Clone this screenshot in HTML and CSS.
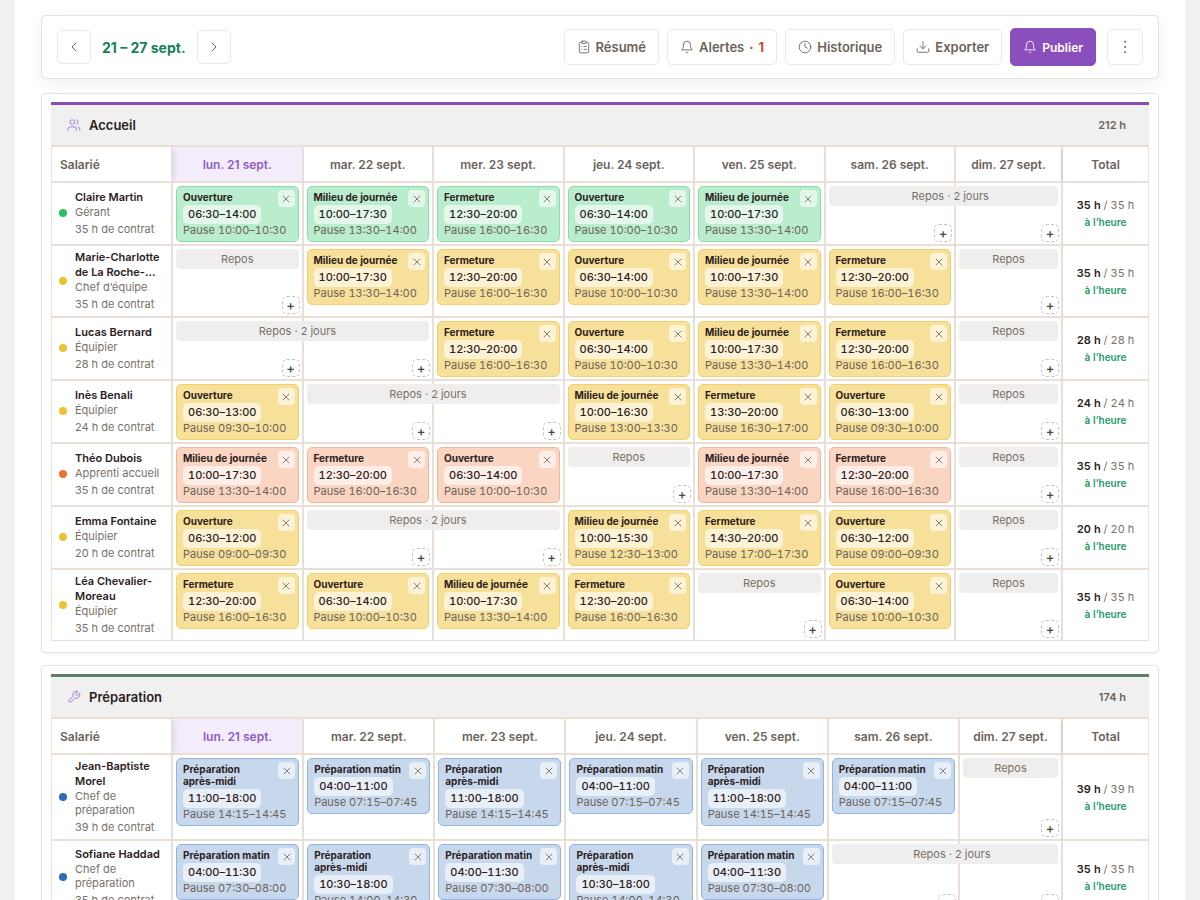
FILE: index.html
```html
<!DOCTYPE html>
<html lang="fr">
<head>
  <meta charset="UTF-8">
  <meta name="viewport" content="width=device-width, initial-scale=1">
  <title>Planning 21 – 27 sept.</title>
  <link rel="stylesheet" href="styles.css">
</head>
<body>
  <main class="page">
    <header class="toolbar">
      <div class="week">
        <button class="btn square" aria-label="Semaine précédente"><svg class="icon" viewBox="0 0 24 24"><path d="m15 18-6-6 6-6"/></svg></button>
        <strong class="week-label">21 – 27 sept.</strong>
        <button class="btn square" aria-label="Semaine suivante"><svg class="icon" viewBox="0 0 24 24"><path d="m9 18 6-6-6-6"/></svg></button>
      </div>
      <div class="actions">
        <button class="btn"><svg class="icon" viewBox="0 0 24 24"><rect x="8" y="2" width="8" height="4" rx="1"/><path d="M16 4h2a2 2 0 0 1 2 2v14a2 2 0 0 1-2 2H6a2 2 0 0 1-2-2V6a2 2 0 0 1 2-2h2M12 11h4M12 16h4M8 11h.01M8 16h.01"/></svg>Résumé</button>
        <button class="btn"><svg class="icon" viewBox="0 0 24 24"><path d="M10.3 21a2 2 0 0 0 3.4 0M6 8a6 6 0 0 1 12 0c0 7 3 9 3 9H3s3-2 3-9"/></svg>Alertes <span class="alert-count"><span>·</span><span>1</span></span></button>
        <button class="btn"><svg class="icon" viewBox="0 0 24 24"><circle cx="12" cy="12" r="10"/><path d="M12 6v6l4 2"/></svg>Historique</button>
        <button class="btn"><svg class="icon" viewBox="0 0 24 24"><path d="M22 15v4a2 2 0 0 1-2 2H4a2 2 0 0 1-2-2v-4M7 10l5 5 5-5M12 15V3"/></svg>Exporter</button>
        <button class="btn primary"><svg class="icon" viewBox="0 0 24 24"><path d="M10.3 21a2 2 0 0 0 3.4 0M6 8a6 6 0 0 1 12 0c0 7 3 9 3 9H3s3-2 3-9"/></svg>Publier</button>
        <button class="btn more" aria-label="Plus d’actions"><svg class="icon dots" viewBox="0 0 24 24"><circle cx="12" cy="3" r="1"/><circle cx="12" cy="12" r="1"/><circle cx="12" cy="21" r="1"/></svg></button>
      </div>
    </header>

    <section class="card accueil">
      <div class="card-head">
        <svg class="icon" viewBox="0 0 24 24"><path d="M16 21v-2a4 4 0 0 0-4-4H6a4 4 0 0 0-4 4v2M22 21v-2a4 4 0 0 0-3-3.870M16 3.130a4 4 0 0 1 0 7.750"/><circle cx="9" cy="7" r="4"/></svg>
        <h2>Accueil</h2>
        <span class="hours">212 h</span>
      </div>
      <table id="accueil"></table>
    </section>

    <section class="card preparation">
      <div class="card-head">
        <svg class="icon" viewBox="0 0 24 24"><path d="M14.700 6.300a1 1 0 0 0 0 1.400l1.600 1.600a1 1 0 0 0 1.400 0l3.770-3.770a6 6 0 0 1-7.940 7.940l-6.910 6.910a2.120 2.120 0 0 1-3-3l6.910-6.910a6 6 0 0 1 7.940-7.940z"/></svg>
        <h2>Préparation</h2>
        <span class="hours">174 h</span>
      </div>
      <table id="preparation"></table>
    </section>
  </main>

  <script>
    const days = ["lun. 21 sept.", "mar. 22 sept.", "mer. 23 sept.", "jeu. 24 sept.", "ven. 25 sept.", "sam. 26 sept.", "dim. 27 sept."];

    // O = ouverture, M = milieu de journée, F = fermeture, PM / PA = préparation
    const titles = {
      O: "Ouverture",
      M: "Milieu de journée",
      F: "Fermeture",
      PM: "Préparation matin",
      PA: "Préparation après-midi"
    };

    // "R" = one day off, "R2" = first of two days off, "-" = second one
    const O = "O 06:30–14:00 10:00–10:30";
    const M = "M 10:00–17:30 13:30–14:00";
    const F = "F 12:30–20:00 16:00–16:30";

    const accueil = [
      ["Claire Martin", "Gérant", 35, "green", [O, M, F, O, M, "R2", "-"]],
      ["Marie-Charlotte de La Roche-…", "Chef d’équipe", 35, "yellow", ["R", M, F, O, M, F, "R"]],
      ["Lucas Bernard", "Équipier", 28, "yellow", ["R2", "-", F, O, M, F, "R"]],
      ["Inès Benali", "Équipier", 24, "yellow", ["O 06:30–13:00 09:30–10:00", "R2", "-", "M 10:00–16:30 13:00–13:30", "F 13:30–20:00 16:30–17:00", "O 06:30–13:00 09:30–10:00", "R"]],
      ["Théo Dubois", "Apprenti accueil", 35, "orange", [M, F, O, "R", M, F, "R"]],
      ["Emma Fontaine", "Équipier", 20, "yellow", ["O 06:30–12:00 09:00–09:30", "R2", "-", "M 10:00–15:30 12:30–13:00", "F 14:30–20:00 17:00–17:30", "O 06:30–12:00 09:00–09:30", "R"]],
      ["Léa Chevalier-Moreau", "Équipier", 35, "yellow", [F, O, M, F, "R", O, "R"]]
    ];

    const matin = "PM 04:00–11:00 07:15–07:45";
    const aprem = "PA 11:00–18:00 14:15–14:45";
    const matin35 = "PM 04:00–11:30 07:30–08:00";
    const aprem35 = "PA 10:30–18:00 14:00–14:30";

    const preparation = [
      ["Jean-Baptiste Morel", "Chef de préparation", 39, "blue", [aprem, matin, aprem, matin, aprem, matin, "R"]],
      ["Sofiane Haddad", "Chef de préparation", 35, "blue", [matin35, aprem35, matin35, aprem35, matin35, "R2", "-"]]
    ];

    function cell(code, i, color, name) {
      const add = `<button class="add" aria-label="Ajouter, ${name}, ${days[i]}">+</button>`;
      if (code === "-") return `<td class="day">${add}</td>`;
      if (code === "R") return `<td class="day"><div class="rest">Repos</div>${add}</td>`;
      if (code === "R2") {
        return `<td class="day over"><div class="rest double${i === 5 ? " weekend" : ""}">Repos · 2 jours</div>${add}</td>`;
      }
      const [type, time, pause] = code.split(" ");
      return `<td class="day"><div class="shift ${color}">
        <div class="shift-title">${titles[type]}</div>
        <div class="time">${time}</div>
        <div class="pause">Pause ${pause}</div>
        <button class="remove" aria-label="Supprimer ${titles[type]}"><svg viewBox="0 0 10 10"><path d="M1 1l8 8M9 1l-8 8"/></svg></button>
      </div></td>`;
    }

    function render(id, staff) {
      const head = days.map((d, i) => `<th scope="col" class="${i === 0 ? "today" : ""}">${d}</th>`).join("");
      const rows = staff.map(([name, role, hours, color, week]) => `<tr>
        <th scope="row"><div class="person">
          <span class="dot ${color}"></span>
          <div>
            <div class="name">${name}</div>
            <div class="role">${role}</div>
            <div class="contract">${hours} h de contrat</div>
          </div>
        </div></th>
        ${week.map((code, i) => cell(code, i, color, name)).join("")}
        <td class="total"><div><b>${hours} h</b> / ${hours} h</div><div class="status">à l’heure</div></td>
      </tr>`).join("");

      document.getElementById(id).innerHTML = `
        <colgroup><col class="col-name"><col span="6"><col class="col-sunday"><col class="col-total"></colgroup>
        <thead><tr><th scope="col" class="first">Salarié</th>${head}<th scope="col" class="last">Total</th></tr></thead>
        <tbody>${rows}</tbody>`;
    }

    render("accueil", accueil);
    render("preparation", preparation);
  </script>
</body>
</html>
```
FILE: styles.css
```css
* { box-sizing: border-box; }
html { background: #f0f0f0; overflow: hidden; }
body {
  --line: #e9dfd6;
  --sunday: 107px;
  margin: 0;
  font-family: Inter, "Liberation Sans", sans-serif;
  font-size: 12px;
  color: #2b201c;
}
button { font-family: inherit; cursor: pointer; }
h2 { margin: 0; font-size: 13px; font-weight: 600; }

.page { margin: 0 15px; padding: 15px 26px 26px; background: #fff; min-height: 100vh; }

/* toolbar */
.toolbar {
  display: flex;
  justify-content: space-between;
  align-items: center;
  padding: 12px 15px;
  margin-bottom: 14px;
  border: 1px solid #e6e2dc;
  border-radius: 5px;
  background: #fff;
  box-shadow: 0 4px 16px rgba(60, 40, 40, 0.07);
}
.week { display: flex; align-items: center; gap: 11px; }
.week-label { font-size: 14px; font-weight: 700; color: #157f5b; }
.actions { display: flex; align-items: center; gap: 8px; }
.icon {
  width: 14px;
  height: 14px;
  fill: none;
  stroke: currentColor;
  stroke-width: 1.5;
  stroke-linecap: round;
  stroke-linejoin: round;
}
.btn {
  display: flex;
  align-items: center;
  justify-content: center;
  gap: 5px;
  height: 36px;
  padding: 0 12px;
  border: 1px solid #ebe8e5;
  border-radius: 5px;
  background: #fff;
  color: #6b635b;
  font-size: 13px;
  font-weight: 600;
}
.square { width: 34px; height: 34px; padding: 0; }
.square .icon { width: 16px; height: 16px; }
.more { width: 36px; padding: 0; margin-left: 3px; }
.dots { fill: currentColor; }
.primary { height: 38px; padding: 0 12px; border-color: #8a4fbd; background: #8a4fbd; color: #fff; font-size: 12px; }
.alert-count { display: flex; gap: 5px; color: #c5481c; font-weight: 700; }

/* department cards */
.card {
  padding: 8px 9px 11px;
  margin-bottom: 12px;
  border: 1px solid #e6e2dc;
  border-radius: 5px;
  background: #fff;
  box-shadow: 0 1px 3px rgba(60, 40, 40, 0.06);
}
.card-head {
  display: flex;
  align-items: center;
  gap: 8px;
  height: 43px;
  padding: 0 23px 0 16px;
  border-top: 3px solid #8850b4;
  background: #f0f0f0;
}
.card-head .icon { color: #9a70cf; }
.preparation .card-head { border-top-color: #5c8064; }
.preparation { --sunday: 103px; }
.hours { margin-left: auto; font-size: 11px; font-weight: 600; color: #6b635b; }

table {
  width: 100%;
  table-layout: fixed;
  border-collapse: separate;
  border-spacing: 0;
  border-top: 2px solid var(--line);
  border-left: 1px solid var(--line);
}
th, td { padding: 0; border-right: 2px solid var(--line); border-bottom: 2px solid var(--line); }
th:last-child, td:last-child { border-right-width: 1px; }
tbody tr:last-child > * { border-bottom-width: 1px; }
.col-name { width: 121px; }
.col-sunday { width: var(--sunday); }
.col-total { width: 86px; }

thead th { height: 36px; font-size: 12px; font-weight: 600; color: #6b635b; }
thead .first { padding-left: 8px; text-align: left; box-shadow: 4px 0 5px -3px rgba(60, 40, 60, 0.14); position: relative; }
thead .last { box-shadow: -4px 0 5px -3px rgba(60, 40, 60, 0.14); position: relative; }
thead .today { background: #f3ecfb; color: #8d5cc6; }

tbody th { text-align: left; font-weight: 400; }
.person { display: flex; align-items: center; gap: 8px; padding: 4px 4px 5px 7px; }
.dot { flex: none; width: 8px; height: 8px; border-radius: 50%; }
.dot.green { background: #27c063; }
.dot.yellow { background: #edc233; }
.dot.orange { background: #e8742e; }
.dot.blue { background: #2b6cb8; }
.name { font-size: 11px; line-height: 15px; font-weight: 600; }
.role, .contract { font-size: 11px; line-height: 14px; color: #77706a; }
.contract { margin-top: 3px; }

/* days */
.day { position: relative; padding: 3px 3px 2px; vertical-align: top; }
.over { z-index: 1; }
.shift {
  position: relative;
  padding: 4px 6px;
  border: 1px solid;
  border-radius: 5px;
  white-space: nowrap;
}
.shift.green { background: #b9edcd; border-color: #8bdcab; }
.shift.yellow { background: #f7e09a; border-color: #f1d06b; }
.shift.orange { background: #f9d5c2; border-color: #f1b79c; }
.shift.blue { background: #c8d8ec; border-color: #92b4e0; }
.shift-title { padding-right: 18px; margin-bottom: 2px; font-size: 10px; line-height: 12px; font-weight: 700; white-space: normal; }
.time {
  width: max-content;
  padding: 0 5px;
  border-radius: 5px;
  background: rgba(255, 255, 255, 0.6);
  font-size: 11px;
  font-variant-numeric: tabular-nums;
  line-height: 19px;
  font-weight: 500;
}
.pause { font-size: 11px; line-height: 13px; font-variant-numeric: tabular-nums; color: #6b635b; }
.remove {
  position: absolute;
  top: 3px;
  right: 3px;
  display: flex;
  align-items: center;
  justify-content: center;
  width: 17px;
  height: 17px;
  padding: 0;
  border: 0;
  border-radius: 4px;
  background: rgba(255, 255, 255, 0.6);
}
.remove svg { width: 8px; height: 8px; fill: none; stroke: #6b635b; stroke-width: 1; }

.rest {
  height: 20px;
  border-radius: 4px;
  background: #f0eeec;
  color: #77706a;
  font-size: 11px;
  line-height: 20px;
  text-align: center;
}
.double { position: absolute; top: 3px; left: 3px; width: calc(200% - 4px); padding-right: 10px; }
.double.weekend { width: calc(100% + var(--sunday) - 6px); padding: 0 0 0 14px; }
.add {
  position: absolute;
  right: 2px;
  bottom: 2px;
  width: 18px;
  height: 18px;
  padding: 0;
  border: 1px dashed #c9c2bb;
  border-radius: 5px;
  background: #fff;
  color: #4d4540;
  font-size: 13px;
  line-height: 16px;
  font-weight: 500;
}

.total { text-align: center; font-size: 11px; line-height: 17px; font-variant-numeric: tabular-nums; color: #77706a; }
.total b { font-weight: 600; color: #2b201c; }
.status { font-size: 10px; line-height: 16px; font-weight: 600; color: #1d9a6c; }
```
